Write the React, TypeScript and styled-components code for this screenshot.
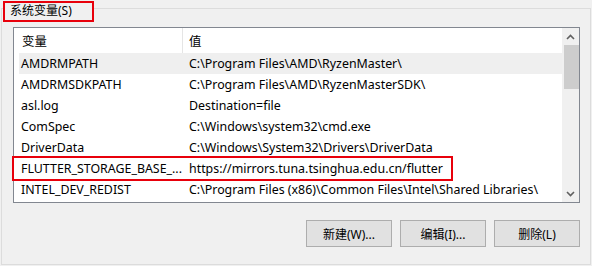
import React from 'react';
import styled, { createGlobalStyle } from 'styled-components';

const GlobalStyle = createGlobalStyle`
  html, body {
    margin: 0;
    padding: 0;
    background: #f0f0f0;
  }
  body {
    font-family: "Noto Sans", "Noto Sans CJK SC", sans-serif;
    font-size: 12px;
    color: #000;
  }
`

const Page = styled.div`
  width: 592px;
  height: 266px;
  padding: 8px 1px 0 1px;
  box-sizing: border-box;
  background: #f0f0f0;
`

const GroupBox = styled.div`
  position: relative;
  box-sizing: border-box;
  width: 590px;
  height: 257px;
  border: 1px solid #dcdcdc;
  padding: 18px 10px 0 11px;
  display: flex;
  flex-direction: column;
  gap: 17px;
`

const Legend = styled.div`
  position: absolute;
  top: -8px;
  left: 1px;
  width: 91px;
  height: 21px;
  box-sizing: border-box;
  border: 2px solid #e8000b;
  background: #f0f0f0;
  padding-left: 5px;
  line-height: 16px;
  white-space: nowrap;
`

const ListBox = styled.div`
  position: relative;
  box-sizing: border-box;
  height: 176px;
  border: 1px solid #828790;
  background: #fff;
  display: flex;
  font-size: 12.4px;
`

const ListBody = styled.div`
  flex: 1;
  display: flex;
  flex-direction: column;
`

const HeaderRow = styled.div`
  display: flex;
  height: 25px;
  align-items: stretch;
`

const HeaderCell = styled.div<{ $width?: number; $pad: number }>`
  ${(p) => (p.$width ? `width: ${p.$width}px;` : 'flex: 1;')}
  padding-left: ${(p) => p.$pad}px;
  box-sizing: border-box;
  display: flex;
  align-items: center;
`

const HeaderDivider = styled.div`
  width: 1px;
  background: #e5e5e5;
`

const Row = styled.div<{ $hot?: boolean }>`
  display: flex;
  height: 21px;
  align-items: center;
  margin-left: 5px;
  background: ${(p) => (p.$hot ? '#efefef' : 'transparent')};
`

const NameCell = styled.div`
  width: 163px;
  padding: 0 2px 0 2px;
  box-sizing: border-box;
  white-space: nowrap;
  overflow: hidden;
`

const ValueCell = styled.div`
  flex: 1;
  padding-left: 7px;
  white-space: nowrap;
  overflow: hidden;
`

const Highlight = styled.div`
  position: absolute;
  left: -2px;
  top: 128px;
  width: 441px;
  height: 25px;
  box-sizing: border-box;
  border: 2px solid #e8000b;
  pointer-events: none;
`

const ScrollBar = styled.div`
  width: 17px;
  background: #f0f0f0;
  display: flex;
  flex-direction: column;
  align-items: center;
`

const ArrowBox = styled.div`
  height: 17px;
  width: 17px;
  display: flex;
  align-items: center;
  justify-content: center;
`

const Thumb = styled.div`
  width: 15px;
  height: 44px;
  margin-left: 1px;
  background: #cdcdcd;
`

const Track = styled.div`
  flex: 1;
`

const ButtonRow = styled.div`
  display: flex;
  justify-content: flex-end;
  gap: 8px;
`

const Button = styled.button`
  width: 86px;
  height: 27px;
  box-sizing: border-box;
  border: 1px solid #adadad;
  background: #e1e1e1;
  font-family: "Noto Sans", "Noto Sans CJK SC", sans-serif;
  font-size: 12px;
  color: #000;
  padding: 0;
`

const Chevron = ({ up }: { up?: boolean }) => (
  <svg width="9" height="6" viewBox="0 0 9 6">
    <polyline
      points={up ? '1,5 4.5,1.5 8,5' : '1,1 4.5,4.5 8,1'}
      fill="none"
      stroke="#606060"
      strokeWidth="1.6"
    />
  </svg>
)

const rows = [
  ['AMDRMPATH', 'C:\\Program Files\\AMD\\RyzenMaster\\'],
  ['AMDRMSDKPATH', 'C:\\Program Files\\AMD\\RyzenMasterSDK\\'],
  ['asl.log', 'Destination=file'],
  ['ComSpec', 'C:\\Windows\\system32\\cmd.exe'],
  ['DriverData', 'C:\\Windows\\System32\\Drivers\\DriverData'],
  ['FLUTTER_STORAGE_BASE_...', 'https://mirrors.tuna.tsinghua.edu.cn/flutter'],
  ['INTEL_DEV_REDIST', 'C:\\Program Files (x86)\\Common Files\\Intel\\Shared Libraries\\'],
]

function App() {
  return (
    <Page>
      <GlobalStyle />
      <GroupBox>
        <Legend>系统变量(S)</Legend>
        <ListBox>
          <ListBody>
            <HeaderRow>
              <HeaderCell $width={168} $pad={8}>变量</HeaderCell>
              <HeaderDivider />
              <HeaderCell $pad={6}>值</HeaderCell>
            </HeaderRow>
            {rows.map(([name, value], i) => (
              <Row key={name} $hot={i === 0}>
                <NameCell>{name}</NameCell>
                <ValueCell>{value}</ValueCell>
              </Row>
            ))}
          </ListBody>
          <ScrollBar>
            <ArrowBox><Chevron up /></ArrowBox>
            <Thumb />
            <Track />
            <ArrowBox><Chevron /></ArrowBox>
          </ScrollBar>
          <Highlight />
        </ListBox>
        <ButtonRow>
          <Button>新建(W)...</Button>
          <Button>编辑(I)...</Button>
          <Button>删除(L)</Button>
        </ButtonRow>
      </GroupBox>
    </Page>
  );
}

export default App;
